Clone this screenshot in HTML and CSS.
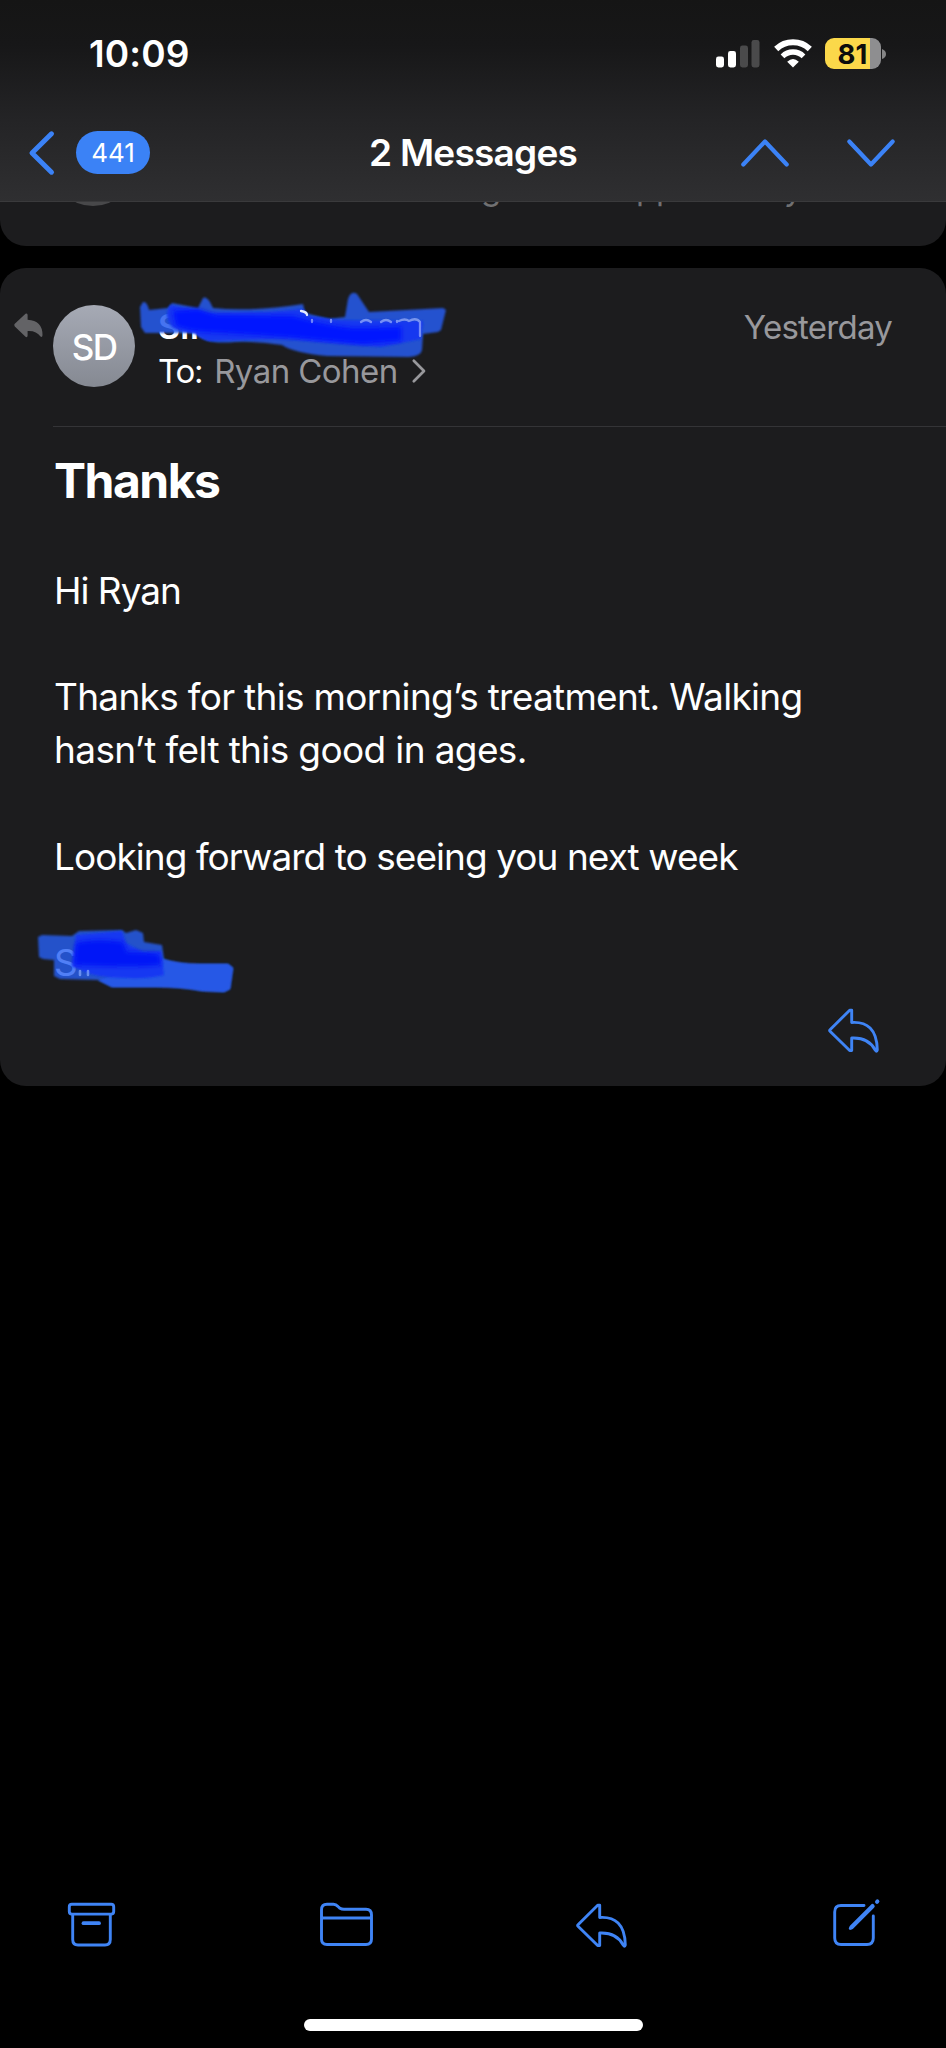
FILE: index.html
```html
<!DOCTYPE html>
<html lang="en">
<head>
<meta charset="utf-8">
<title>2 Messages</title>
<link rel="stylesheet" href="styles.css">
</head>
<body>
<div class="screen">
  <header class="top">
    <div class="status">
      <span class="time">10:09</span>
      <div class="indicators">
        <svg class="signal" width="44" height="28" viewBox="0 0 44 28"><g fill="#fff"><rect x="0" y="16.5" width="8" height="11" rx="2.4"/><rect x="12" y="11" width="8" height="16.5" rx="2.4"/></g><g fill="#4a4a4b"><rect x="24" y="5.500" width="8" height="22" rx="2.4"/><rect x="35.500" y="0" width="8" height="27.500" rx="2.400"/></g></svg>
        <svg class="wifi" width="38" height="28" viewBox="0 0 38 28"><g fill="none" stroke="#fff" stroke-width="6"><path d="M2.200 9A24.500 24.500 0 0 1 35.800 9"/><path d="M8.500 16.300A15 15 0 0 1 29.500 16.300" stroke-width="5.300"/></g><path d="M19 27.500L13.200 21.700Q19 16.500 24.800 21.700Z" fill="#fff"/></svg>
        <div class="battery"><span class="level">81</span></div>
        <svg class="nub" width="4" height="10" viewBox="0 0 4 10"><path d="M0 0Q4 1.500 4 5T0 10Z" fill="#858586"/></svg>
      </div>
    </div>
    <nav class="nav">
      <svg class="back" width="26" height="44" viewBox="0 0 26 44"><path d="M22.500 2.800L3 22L22.500 41.200"/></svg>
      <span class="badge">441</span>
      <h1 class="title">2 Messages</h1>
      <svg class="prev" width="50" height="30" viewBox="0 0 50 30"><path d="M3.300 26.500L25 3.500L46.700 26.500"/></svg>
      <svg class="next" width="50" height="30" viewBox="0 0 50 30"><path d="M3.300 3.500L25 26.500L46.700 3.500"/></svg>
    </nav>
  </header>

  <section class="previous">
    <i class="previous-avatar"></i>
    <span class="frag frag-g">g</span><span class="frag frag-p1">p</span><span class="frag frag-p2">p</span><span class="frag frag-y">y</span>
  </section>

  <article class="card">
    <div class="card-head">
      <svg class="replied" width="29" height="25" viewBox="0 0 29 25"><path d="M.4 12.500Q0 11.500 .8 10.800L11.500 .8Q13.500 -.4 13.600 2V6.700Q28.500 7.500 28.500 22Q28.300 25 26.500 23.600Q22.500 17.500 13.600 18V22.600Q13.400 25 11.500 23.700L.8 13.400Z" fill="#636366"/></svg>
      <div class="avatar">SD</div>
      <div class="people">
        <div class="sender">S<span class="stem">ıı</span></div>
        <div class="to"><span class="label">To:</span><span class="recipient">Ryan Cohen</span><svg width="14" height="24" viewBox="0 0 14 24"><path d="M1.800 1.800L12 12L1.800 22.200" fill="none" stroke="#98989c" stroke-width="2.700" stroke-linecap="round" stroke-linejoin="round"/></svg></div>
      </div>
      <span class="date">Yesterday</span>
      <svg class="scribble scribble-top" width="312" height="70" viewBox="0 0 312 70">
        <defs><filter id="soft" x="-5%" y="-10%" width="110%" height="120%"><feGaussianBlur stdDeviation=".8"/></filter><filter id="softer" x="-10%" y="-20%" width="120%" height="140%"><feGaussianBlur stdDeviation="2"/></filter></defs>
        <path filter="url(#soft)" opacity=".85" d="M1 14L4 9Q8 8 10 17L29 15L33 10L59 15L64 5Q67 3 71 9L74 15Q112 19 164 11L166 20L190 26L206 24L209 6Q212 -3 218 1L230 19L304 15L307 17L302 37L299 39L284 41L283 57Q282 63 270 64L188 63Q155 60 143 52Q115 48 96 49Q66 52 56 40L6 40L2 34Z" fill="#265bee"/>
        <g filter="url(#soft)">
          <path d="M31 12Q48 15 70 20L128 19L164 16L170 23L200 27L284 28L282 46L242 54L180 49Q154 46 135 46L70 48Q62 46 56 40Q42 39 33 34Q24 22 31 12Z" fill="#1338f0"/>
        </g>
        <path filter="url(#softer)" d="M59 16Q67 19 78 22L154 23Q190 33 214 35Q242 35 262 34L262 48L224 51L158 45Q120 42 67 39Q50 38 37 33L34 18Z" fill="#0418ff"/>
        <g fill="none" stroke="#b4c5ff" stroke-width="2.300" opacity=".6" stroke-linecap="round"><path d="M173 27V29M192 27V29M222 29Q227 25 232 29M242 29Q247 25 252 29M258 28V29M260 28Q266 25 270 28Q277 24 281 29V43"/></g>
        <path d="M162 18Q168 19 168 22" fill="none" stroke="#e6ecff" stroke-width="2.300" stroke-linecap="round"/>
      </svg>
    </div>
    <div class="content">
      <h2 class="subject">Thanks</h2>
      <div class="body">
        <p class="l1">Hi Ryan</p>
        <p><span class="l2">Thanks for this morning’s treatment. Walking</span><br><span class="l3">hasn’t felt this good in ages.</span></p>
        <p class="l4">Looking forward to seeing you next week</p>
        <p class="sign">S
          <svg class="scribble scribble-sign" width="198" height="66" viewBox="0 0 198 66">
            <path filter="url(#soft)" opacity=".8" d="M2 8L6 6L36 7L43 2L86 1L90 4L100 1L107 4L108 13L126 16L128 30Q142 35 164 35L192 35L197 39L194 60L188 63L166 62Q145 58 120 58L76 58L62 51L24 50L18 47L18 31L7 30L3 28Z" fill="#2860f5"/>
            <path filter="url(#soft)" d="M126 30Q142 35 164 35L192 35L197 39L194 60L188 63L166 62Q145 58 120 58L76 58L62 51Z" fill="#2558e6"/>
            <path filter="url(#soft)" d="M40 6L86 2L90 14L107 23L125 22L128 46Q112 51 72 48Q54 47 36 37Z" fill="#1338f2"/>
            <path filter="url(#softer)" d="M40 14Q60 9 87 13L91 23Q110 23 123 25L125 36Q106 38 70 37L38 36Z" fill="#0418f7"/>
            <path d="M44 42V46M52 42V46" fill="none" stroke="#87a9ff" stroke-width="2.600" stroke-linecap="round" opacity=".7"/>
          </svg>
        </p>
      </div>
      <svg class="icon card-reply" width="51" height="45" viewBox="0 0 51 45"><path d="M23.700 2.200V14.500C39 13.500 49 21 49.300 42Q48.800 44.500 47.200 42C42 32 34 29.500 23.700 30V42.600L21.700 42.500L2 23.200Q1.200 22.500 2 21.800L21.700 2.200Z"/></svg>
    </div>
  </article>

  <footer class="bottom">
    <div class="toolbar">
      <svg class="icon" width="47" height="45" viewBox="0 0 47 45"><rect x="1.300" y="1.300" width="44.400" height="9.800" rx="2.500"/><path d="M4.700 11.500V36.500Q4.700 42 10 42H37Q42.300 42 42.300 36.500V11.500"/><path d="M15.500 20.200H31" stroke-width="3.800"/></svg>
      <svg class="icon" width="53" height="45" viewBox="0 0 53 45"><path d="M1.500 36V7Q1.500 1.300 7 1.300H13.500Q16 1.300 18 3.500L20 5.300Q21.500 6.300 24 6.300H46Q51.500 6.300 51.500 12V36Q51.500 41.500 46 41.500H7Q1.500 41.500 1.500 36ZM1.500 15H51.500"/></svg>
      <svg class="icon reply" width="51" height="45" viewBox="0 0 51 45"><path d="M23.700 2.200V14.500C39 13.500 49 21 49.300 42Q48.800 44.500 47.200 42C42 32 34 29.500 23.700 30V42.600L21.700 42.500L2 23.200Q1.200 22.500 2 21.800L21.700 2.200Z"/></svg>
      <svg class="icon compose" width="47" height="49" viewBox="0 0 47 49"><path d="M31 6.500H8Q1.700 6.500 1.700 13V39Q1.700 45.500 8 45.500H34Q40.300 45.500 40.300 39V17"/><path d="M18.500 28.200L39.500 7.200" stroke-width="4.400"/><path d="M17.200 29.600L19.500 27.300" stroke-width="2.800"/><path d="M44 2.800L44.400 2.400" stroke-width="4"/></svg>
    </div>
    <div class="home"></div>
  </footer>
</div>
</body>
</html>
```
FILE: styles.css
```css
* { box-sizing: border-box; }
body { margin: 0; background: #000; color: #fff; font-family: Inter, "Liberation Sans", sans-serif; }
h1, h2, p { margin: 0; }
svg { display: block; flex: none; overflow: visible; }
.screen { width: 946px; height: 2048px; display: flex; flex-direction: column; overflow: hidden; }

.top { height: 202px; background: linear-gradient(#151515 0, #171718 22%, #242426 60%, #2f2f31 100%); border-bottom: 1px solid #3a3a3c; }
.status { height: 108px; display: flex; justify-content: space-between; padding: 0 60px 0 89px; }
.time { margin-top: 32px; height: 44px; font-size: 37px; line-height: 44px; font-weight: 600; letter-spacing: .1px; }
.indicators { display: flex; align-items: flex-start; }
.signal { margin-top: 40px; }
.wifi { margin: 40px 0 0 13.500px; }
.battery { margin: 38px 0 0 13px; width: 56px; height: 31px; border-radius: 9px; background: linear-gradient(90deg, #fbd84a 0 45.500px, #8e8e90 45.500px); text-align: center; }
.level { display: block; font-size: 27.500px; line-height: 32px; font-weight: 700; color: #0c0c0c; }
.nub { margin: 48.500px 0 0 1.500px; }
.nav { display: flex; align-items: flex-start; }
.nav path { fill: none; stroke: #3b82f6; stroke-width: 4.200; stroke-linecap: round; stroke-linejoin: round; }
.back { margin: 22.500px 0 0 29px; }
.nav .back path { stroke-width: 5; }
.badge { margin: 23px 0 0 21px; width: 74px; height: 42.500px; border-radius: 22px; background: #3b82f6; text-align: center; font-size: 26px; line-height: 43px; }
.title { margin: 23px 0 0 219px; width: 371px; font-size: 37px; line-height: 44px; font-weight: 600; white-space: nowrap; letter-spacing: -.750px; }
.prev { margin-top: 30px; }
.next { margin: 30px 0 0 56px; }

.previous { position: relative; height: 43.500px; overflow: hidden; background: #1c1c1e; border-radius: 0 0 26px 26px; color: #707072; }
.previous-avatar { position: absolute; left: 52px; top: -78px; width: 82px; height: 82px; border-radius: 50%; background: #48484a; }
.frag { position: absolute; top: -34px; font-size: 33px; line-height: 40px; }
.frag-g { left: 481px; }
.frag-p1 { left: 636px; }
.frag-p2 { left: 656px; }
.frag-y { left: 784px; }

.card { margin-top: 22.500px; height: 817.500px; background: #1c1c1e; border-radius: 26px; }
.card-head { position: relative; height: 158px; display: flex; align-items: flex-start; padding: 0 54px 0 13.500px; }
.card-head::after { content: ""; position: absolute; left: 53px; right: 0; bottom: -1px; height: 1px; background: #343437; }
.replied { margin-top: 45px; }
.avatar { margin: 37px 0 0 10.500px; width: 82px; height: 82px; border-radius: 50%; background: linear-gradient(#a6aab5, #858992); text-align: center; font-size: 35px; line-height: 84px; font-weight: 500; letter-spacing: -1.700px; }
.people { margin: 36.500px 0 0 23px; line-height: 44px; font-size: 33px; flex: 1; }
.sender { height: 44px; font-size: 34px; font-weight: 600; }
.stem { letter-spacing: 1px; }
.to { height: 44px; display: flex; align-items: center; white-space: nowrap; }
.label { letter-spacing: -1.300px; }
.recipient { margin-left: 12px; color: #98989c; letter-spacing: -.550px; }
.to svg { margin-left: 14px; }
.date { margin-top: 36.500px; font-size: 33px; line-height: 44px; color: #98989c; letter-spacing: -.750px; }
.scribble { position: absolute; }
.scribble-top { left: 139px; top: 25px; }

.content { display: flex; flex-direction: column; padding: 24.500px 67px 0 54px; }
.subject { font-size: 48px; line-height: 60px; font-weight: 700; letter-spacing: -1.500px; }
.body { margin-top: 53.400px; display: flex; flex-direction: column; gap: 53.200px; font-size: 37px; line-height: 53.200px; white-space: nowrap; }
.l1 { letter-spacing: -1px; }
.l2 { letter-spacing: -.700px; }
.l3 { letter-spacing: -.630px; }
.l4 { letter-spacing: -.950px; }
.sign { position: relative; height: 53.200px; }
.scribble-sign { left: -18px; top: -7px; }
.card-reply { align-self: flex-end; margin-top: 18.500px; }
.icon { fill: none; stroke: #3f84f5; stroke-width: 2.900; stroke-linecap: round; stroke-linejoin: round; }

.bottom { margin-top: auto; height: 149px; display: flex; flex-direction: column; align-items: center; }
.toolbar { width: 100%; display: flex; justify-content: space-between; align-items: flex-start; padding: 4px 66px 0 68px; }
.reply { margin: -.500px 1.500px 0 -1.500px; }
.compose { margin-top: -4px; }
.home { margin-top: auto; margin-bottom: 17px; width: 339px; height: 12px; border-radius: 6px; background: #fff; }
```
